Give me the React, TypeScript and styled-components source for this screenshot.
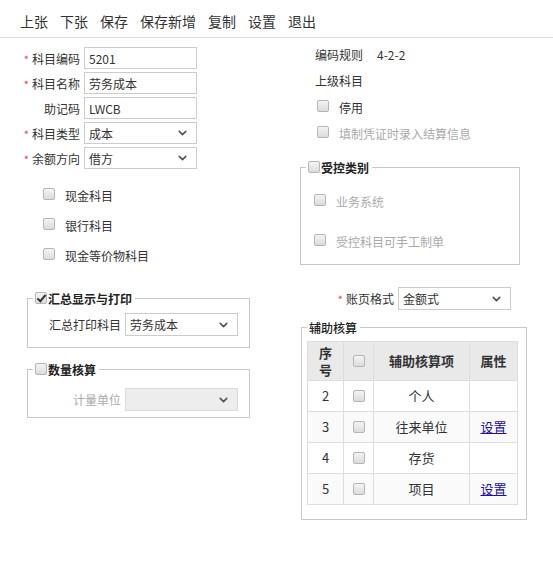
import React from "react";
import styled, { createGlobalStyle } from "styled-components";
import { ChevronDown } from "lucide-react";

const GlobalStyle = createGlobalStyle`
  body {
    margin: 0;
    background: #fff;
    font-family: "Noto Sans CJK SC", "Liberation Sans", sans-serif;
    font-size: 12px;
    color: #333;
  }
`;

const Toolbar = styled.div`
  display: flex;
  align-items: center;
  height: 38px;
  box-sizing: border-box;
  padding: 5px 0 0 20px;
  border-bottom: 1px solid #ddd;

  span {
    font-size: 14px;
    color: #333;
    margin-right: 12px;
    cursor: pointer;
  }
`;

const Main = styled.div`
  display: flex;
`;

const LeftCol = styled.div`
  width: 300px;
  padding-top: 9px;
`;

const RightCol = styled.div`
  width: 230px;
  padding-top: 3px;
`;

const FormRow = styled.div`
  display: flex;
  align-items: center;
  height: 22px;
  margin-bottom: 3px;
`;

const Label = styled.label<{ $w?: number; $muted?: boolean }>`
  width: ${(p) => p.$w ?? 84}px;
  padding-right: 4px;
  box-sizing: border-box;
  text-align: right;
  white-space: nowrap;
  color: ${(p) => (p.$muted ? "#aaa" : "#333")};
`;

const Req = styled.i`
  font-style: normal;
  color: #e5484d;
  margin-right: 3px;
  font-size: 11px;
`;

const TextInput = styled.input`
  width: 113px;
  height: 22px;
  box-sizing: border-box;
  border: 1px solid #ccc;
  padding: 0 4px;
  font: inherit;
  color: #333;
  outline: none;
`;

const SelectWrap = styled.div<{ $h?: number; $disabled?: boolean }>`
  position: relative;
  width: 113px;
  height: ${(p) => p.$h ?? 22}px;

  select {
    appearance: none;
    width: 100%;
    height: 100%;
    box-sizing: border-box;
    border: 1px solid #ccc;
    padding: 0 4px;
    font: inherit;
    color: #333;
    background: ${(p) => (p.$disabled ? "#e6e6e6" : "#fff")};
    outline: none;
  }

  svg {
    position: absolute;
    right: 8px;
    top: 50%;
    transform: translateY(-50%);
    pointer-events: none;
    color: #555;
  }
`;

const Check = styled.input.attrs({ type: "checkbox" })`
  appearance: none;
  width: 12px;
  height: 12px;
  margin: 0;
  flex-shrink: 0;
  border: 1px solid #b5b5b5;
  border-radius: 2px;
  background: linear-gradient(#f4f4f4, #dcdcdc);
  box-sizing: border-box;
  position: relative;

  &:checked::after {
    content: "";
    position: absolute;
    left: 3px;
    top: 0px;
    width: 3px;
    height: 7px;
    border: solid #333;
    border-width: 0 2px 2px 0;
    transform: rotate(40deg);
  }
`;

const CheckRow = styled.div<{ $pad: number; $h: number; $muted?: boolean }>`
  display: flex;
  align-items: center;
  gap: 10px;
  height: ${(p) => p.$h}px;
  padding-left: ${(p) => p.$pad}px;
  color: ${(p) => (p.$muted ? "#aaa" : "#333")};

  span {
    padding-top: 3px;
  }
`;

const Group = styled.fieldset<{ $w: number; $ml: number; $mt: number; $pb: number }>`
  width: ${(p) => p.$w}px;
  box-sizing: border-box;
  margin: ${(p) => p.$mt}px 0 0 ${(p) => p.$ml}px;
  padding: 0 0 ${(p) => p.$pb}px 0;
  border: 1px solid #c8c8c8;
  min-width: 0;
`;

const Legend = styled.legend<{ $weight?: number }>`
  display: flex;
  align-items: center;
  gap: 1px;
  margin-left: 5px;
  padding: 0 3px 0 2px;
  height: 16px;
  font-weight: ${(p) => p.$weight ?? 700};
  color: #222;
`;

const InfoRow = styled.div`
  display: flex;
  align-items: center;
  height: 26px;
  padding-left: 15px;
  gap: 14px;
`;

const Grid = styled.table`
  margin: 6px 0 0 5px;
  width: 210px;
  table-layout: fixed;
  border-collapse: collapse;
  font-size: 13px;
  color: #333;

  th,
  td {
    border: 1px solid #ddd;
    text-align: center;
    padding: 0;
    line-height: 16px;
  }

  thead tr {
    height: 39px;
  }

  th {
    background: #e9e9e9;
    font-weight: 700;
  }

  tbody tr {
    height: 31px;
  }

  tbody tr:nth-child(even) td {
    background: #fafafa;
  }

  a {
    color: #1a0dab;
    text-decoration: underline;
  }
`;

const CellCheck = styled.div`
  display: flex;
  justify-content: center;
`;

const Narrow = styled.span`
  display: inline-block;
  width: 1em;
  line-height: 17px;
  word-break: break-all;
`;

const rows = [
  { no: 2, name: "个人", link: false },
  { no: 3, name: "往来单位", link: true },
  { no: 4, name: "存货", link: false },
  { no: 5, name: "项目", link: true },
];

function Select({ value, h, disabled }: { value: string; h?: number; disabled?: boolean }) {
  return (
    <SelectWrap $h={h} $disabled={disabled}>
      <select value={value} disabled={disabled} onChange={() => {}}>
        <option value={value}>{value}</option>
      </select>
      <ChevronDown size={13} strokeWidth={3} />
    </SelectWrap>
  );
}

export default function App() {
  return (
    <>
      <GlobalStyle />
      <Toolbar>
        {["上张", "下张", "保存", "保存新增", "复制", "设置", "退出"].map((t) => (
          <span key={t}>{t}</span>
        ))}
      </Toolbar>
      <Main>
        <LeftCol>
          <FormRow>
            <Label><Req>*</Req>科目编码</Label>
            <TextInput defaultValue="5201" />
          </FormRow>
          <FormRow>
            <Label><Req>*</Req>科目名称</Label>
            <TextInput defaultValue="劳务成本" />
          </FormRow>
          <FormRow>
            <Label>助记码</Label>
            <TextInput defaultValue="LWCB" />
          </FormRow>
          <FormRow>
            <Label><Req>*</Req>科目类型</Label>
            <Select value="成本" />
          </FormRow>
          <FormRow>
            <Label><Req>*</Req>余额方向</Label>
            <Select value="借方" />
          </FormRow>

          <div style={{ marginTop: 10 }}>
            <CheckRow $pad={43} $h={30}><Check /><span>现金科目</span></CheckRow>
            <CheckRow $pad={43} $h={30}><Check /><span>银行科目</span></CheckRow>
            <CheckRow $pad={43} $h={30}><Check /><span>现金等价物科目</span></CheckRow>
          </div>

          <Group $w={223} $ml={27} $mt={21} $pb={11}>
            <Legend><Check defaultChecked /><span>汇总显示与打印</span></Legend>
            <FormRow style={{ marginTop: 7, marginBottom: 0, height: 23 }}>
              <Label $w={97}>汇总打印科目</Label>
              <Select value="劳务成本" h={23} />
            </FormRow>
          </Group>

          <Group $w={223} $ml={27} $mt={13} $pb={6}>
            <Legend><Check /><span>数量核算</span></Legend>
            <FormRow style={{ marginTop: 11, marginBottom: 0, height: 23 }}>
              <Label $w={97} $muted>计量单位</Label>
              <Select value="" h={23} disabled />
            </FormRow>
          </Group>
        </LeftCol>

        <RightCol>
          <InfoRow><span>编码规则</span><span>4-2-2</span></InfoRow>
          <InfoRow><span>上级科目</span></InfoRow>
          <CheckRow $pad={17} $h={26}><Check /><span>停用</span></CheckRow>
          <CheckRow $pad={17} $h={26} $muted><Check /><span>填制凭证时录入结算信息</span></CheckRow>

          <Group $w={220} $ml={0} $mt={14} $pb={4}>
            <Legend><Check /><span>受控类别</span></Legend>
            <CheckRow $pad={13} $h={40} $muted style={{ marginTop: 5 }}><Check /><span>业务系统</span></CheckRow>
            <CheckRow $pad={13} $h={40} $muted><Check /><span>受控科目可手工制单</span></CheckRow>
          </Group>

          <FormRow style={{ marginTop: 22, height: 23 }}>
            <Label $w={98}><Req>*</Req>账页格式</Label>
            <Select value="金额式" h={23} />
          </FormRow>

          <Group $w={226} $ml={1} $mt={9} $pb={14}>
            <Legend $weight={500}><span>辅助核算</span></Legend>
            <Grid>
              <colgroup>
                <col style={{ width: 36 }} />
                <col style={{ width: 30 }} />
                <col style={{ width: 96 }} />
                <col style={{ width: 48 }} />
              </colgroup>
              <thead>
                <tr>
                  <th><Narrow>序号</Narrow></th>
                  <th><CellCheck><Check /></CellCheck></th>
                  <th>辅助核算项</th>
                  <th>属性</th>
                </tr>
              </thead>
              <tbody>
                {rows.map((r) => (
                  <tr key={r.no}>
                    <td>{r.no}</td>
                    <td><CellCheck><Check /></CellCheck></td>
                    <td>{r.name}</td>
                    <td>{r.link && <a href="#">设置</a>}</td>
                  </tr>
                ))}
              </tbody>
            </Grid>
          </Group>
        </RightCol>
      </Main>
    </>
  );
}
